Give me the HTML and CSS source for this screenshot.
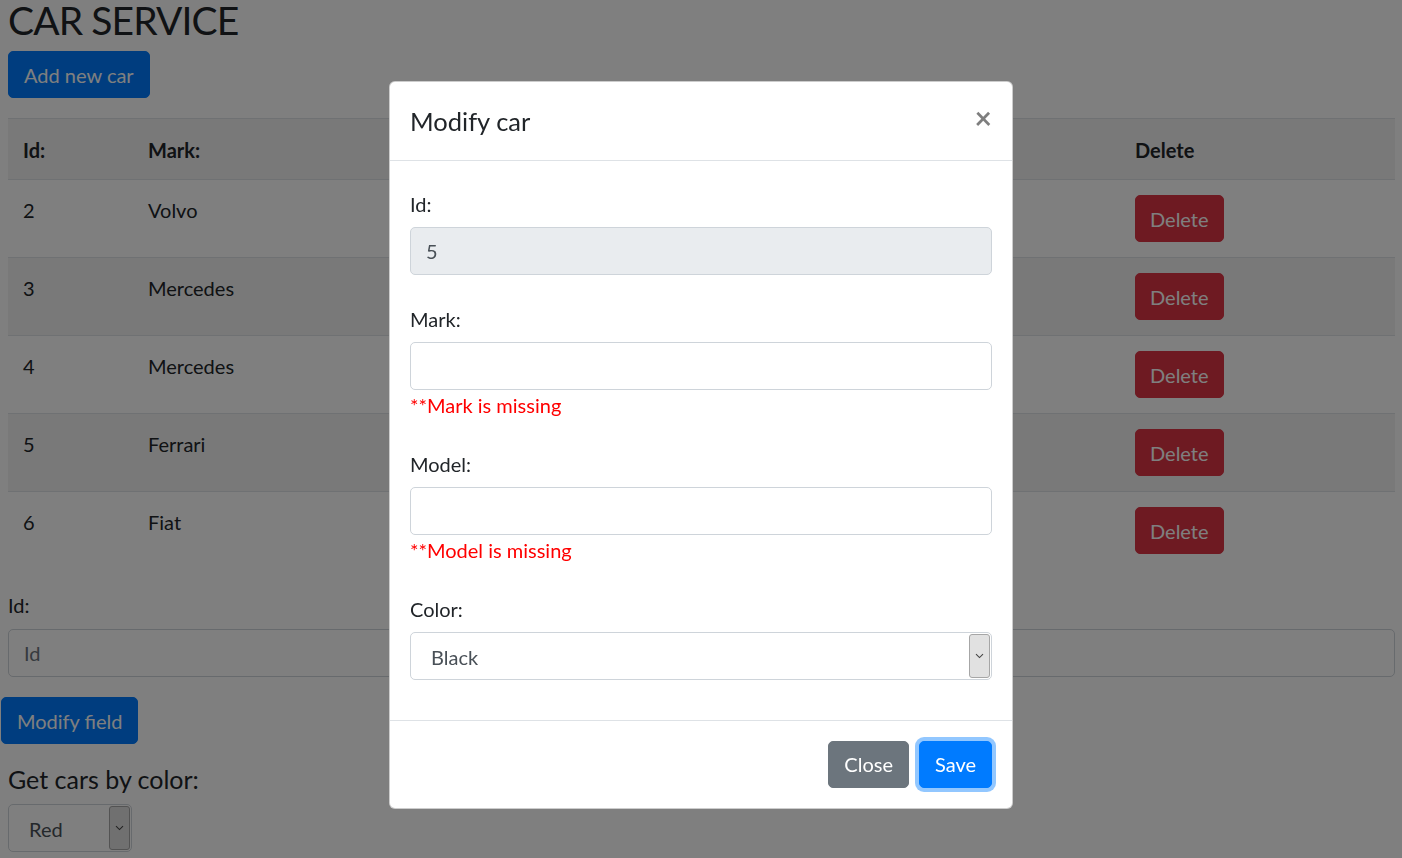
FILE: index.html
```html
<!DOCTYPE html>
<html lang="en">
<head>
<meta charset="utf-8">
<title>Car Service</title>
<link rel="stylesheet" href="styles.css">
</head>
<body>
<div class="page">
  <h1 class="title">CAR SERVICE</h1>
  <button class="btn btn-primary add-btn">Add new car</button>

  <table class="cars">
    <colgroup>
      <col class="c-id"><col class="c-mark"><col class="c-model"><col class="c-color"><col class="c-modify"><col class="c-delete">
    </colgroup>
    <tbody>
      <tr><th>Id:</th><th>Mark:</th><th>Model:</th><th>Color:</th><th>Modify</th><th>Delete</th></tr>
      <tr><td>2</td><td>Volvo</td><td>V60</td><td>Black</td><td><button class="btn btn-primary">Modify</button></td><td><button class="btn btn-danger">Delete</button></td></tr>
      <tr><td>3</td><td>Mercedes</td><td>C200</td><td>Red</td><td><button class="btn btn-primary">Modify</button></td><td><button class="btn btn-danger">Delete</button></td></tr>
      <tr><td>4</td><td>Mercedes</td><td>E300</td><td>White</td><td><button class="btn btn-primary">Modify</button></td><td><button class="btn btn-danger">Delete</button></td></tr>
      <tr><td>5</td><td>Ferrari</td><td>F40</td><td>Red</td><td><button class="btn btn-primary">Modify</button></td><td><button class="btn btn-danger">Delete</button></td></tr>
      <tr><td>6</td><td>Fiat</td><td>Punto</td><td>Blue</td><td><button class="btn btn-primary">Modify</button></td><td><button class="btn btn-danger">Delete</button></td></tr>
    </tbody>
  </table>

  <div class="form-group">
    <label class="label">Id:</label>
    <input class="form-control" type="text" placeholder="Id">
  </div>
  <button class="btn btn-primary modify-btn">Modify field</button>

  <h5 class="subtitle">Get cars by color:</h5>
  <div class="select small-select">
    <span class="select-value">Red</span>
    <span class="select-arrow"><svg width="9" height="6" viewBox="0 0 9 6"><path d="M1 1.2 L4.5 4.6 L8 1.2" fill="none" stroke="#444" stroke-width="1.1"/></svg></span>
  </div>
</div>

<div class="backdrop">
  <div class="modal">
    <div class="modal-header">
      <h5 class="modal-title">Modify car</h5>
      <button class="close">×</button>
    </div>
    <div class="modal-body">
      <div class="field">
        <label class="label">Id:</label>
        <input class="form-control disabled" type="text" value="5" disabled>
      </div>
      <div class="field">
        <label class="label">Mark:</label>
        <input class="form-control" type="text">
        <div class="error">**Mark is missing</div>
      </div>
      <div class="field">
        <label class="label">Model:</label>
        <input class="form-control" type="text">
        <div class="error">**Model is missing</div>
      </div>
      <div class="field">
        <label class="label">Color:</label>
        <div class="select">
          <span class="select-value">Black</span>
          <span class="select-arrow"><svg width="9" height="6" viewBox="0 0 9 6"><path d="M1 1.2 L4.5 4.6 L8 1.2" fill="none" stroke="#444" stroke-width="1.1"/></svg></span>
        </div>
      </div>
    </div>
    <div class="modal-footer">
      <button class="btn btn-secondary">Close</button>
      <button class="btn btn-primary focus">Save</button>
    </div>
  </div>
</div>
</body>
</html>
```
FILE: styles.css
```css
* { box-sizing: border-box; }

html, body {
  margin: 0;
  padding: 0;
  background: #fff;
}

body {
  font-family: "Lato", "Open Sans", sans-serif;
  font-size: 20px;
  line-height: 30px;
  color: #212529;
  overflow: hidden;
  height: 858px;
}

.page {
  padding: 0 7px 0 8px;
}

.title {
  font-size: 39px;
  font-weight: 400;
  letter-spacing: -0.9px;
  line-height: 40px;
  margin: 0 0 11px;
}

.btn {
  display: inline-block;
  font-family: inherit;
  font-size: 20px;
  line-height: 30px;
  padding: 7.5px 15px;
  border: 1px solid transparent;
  border-radius: 5px;
  color: #fff;
  cursor: pointer;
}

.btn-primary { background: #007bff; border-color: #007bff; }
.btn-danger { background: #dc3545; border-color: #dc3545; }
.btn-secondary { background: #6c757d; border-color: #6c757d; }

.btn.focus {
  box-shadow: 0 0 0 4px rgba(38, 143, 255, 0.5);
}

.add-btn {
  display: block;
  margin-bottom: 20px;
}

.cars {
  width: 100%;
  border-collapse: collapse;
  table-layout: fixed;
  margin-bottom: 21px;
}

.c-id { width: 125px; }
.c-mark { width: 250px; }
.c-model { width: 250px; }
.c-color { width: 250px; }
.c-modify { width: 237px; }
.c-delete { width: 275px; }

.cars th,
.cars td {
  text-align: left;
  vertical-align: top;
  padding: 15px;
  border-top: 1px solid #dee2e6;
}

.cars th {
  font-weight: 700;
  padding: 16px 15px 14px;
}

.cars .btn-danger { padding: 7.5px 14px; }

.cars tr:nth-of-type(odd) {
  background: rgba(0, 0, 0, 0.05);
}

.label {
  display: block;
  margin-bottom: 9px;
}

.form-control {
  display: block;
  width: 100%;
  height: 48px;
  padding: 8px 15px;
  font-family: inherit;
  font-size: 20px;
  line-height: 30px;
  color: #495057;
  background: #fff;
  border: 1px solid #ced4da;
  border-radius: 5px;
}

.form-control::placeholder { color: #6c757d; }

.form-control.disabled {
  background: #e9ecef;
  opacity: 1;
}

.modify-btn {
  display: block;
  margin: 20px 0 0 -7px;
}

.subtitle {
  font-size: 25px;
  font-weight: 400;
  line-height: 30px;
  margin: 20px 0 10px;
}

.select {
  display: flex;
  align-items: stretch;
  height: 48px;
  padding: 1px;
  border: 1px solid #ced4da;
  border-radius: 5px;
  background: #fff;
  color: #495057;
}

.small-select { width: 124px; }

.select-value {
  flex: 1;
  padding: 8px 0 0 19px;
  line-height: 30px;
}

.select-arrow {
  width: 21px;
  display: flex;
  align-items: center;
  justify-content: center;
  background: #e1e1e1;
  border: 1px solid #a6a6a6;
  border-radius: 3px;
}

/* modal */
.backdrop {
  position: fixed;
  inset: 0;
  background: rgba(0, 0, 0, 0.5);
  display: flex;
  justify-content: center;
  align-items: flex-start;
  padding-top: 81px;
}

.modal {
  width: 624px;
  background: #fff;
  border: 1px solid rgba(0, 0, 0, 0.2);
  border-radius: 6px;
}

.modal-header {
  display: flex;
  align-items: flex-start;
  padding: 20px 20px 19px;
  border-bottom: 1px solid #dee2e6;
}

.modal-title {
  margin: 0;
  font-size: 25.5px;
  font-weight: 400;
  line-height: 37.5px;
  padding-top: 1px;
}

.close {
  margin: -20px -20px -20px auto;
  padding: 20px;
  background: transparent;
  border: 0;
  font-family: inherit;
  font-size: 30px;
  font-weight: 700;
  line-height: 1;
  color: #000;
  opacity: 0.5;
  text-shadow: 0 1px 0 #fff;
}

.modal-body {
  padding: 28px 20px 40px;
}

.field + .field { margin-top: 29px; }

.modal-body .label { margin-bottom: 8px; }

.error {
  color: #ff0000;
  line-height: 30px;
}

.modal-footer {
  display: flex;
  justify-content: flex-end;
  align-items: center;
  padding: 15px;
  border-top: 1px solid #dee2e6;
}

.modal-footer .btn { margin: 5px; }
```
